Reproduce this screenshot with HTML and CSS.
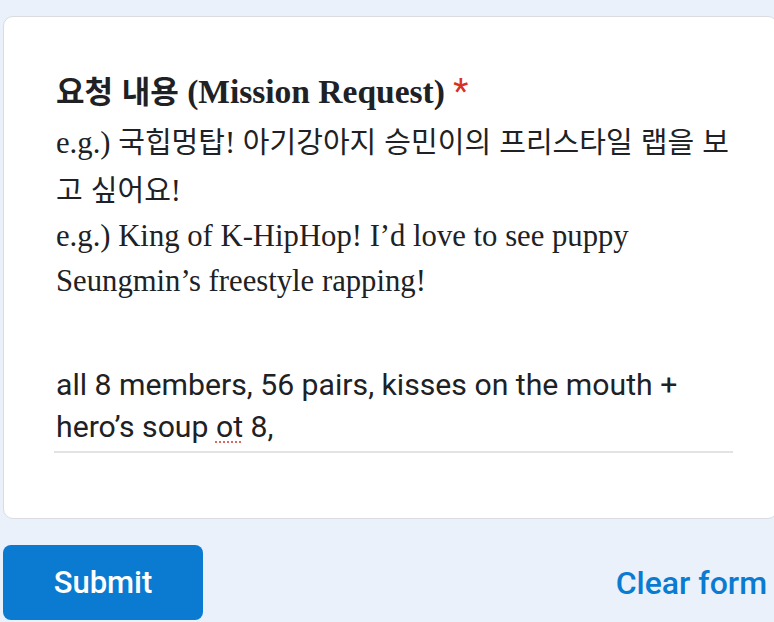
FILE: index.html
```html
<!DOCTYPE html>
<html lang="ko">
<head>
<meta charset="utf-8">
<title>Mission Request</title>
<link rel="stylesheet" href="styles.css">
</head>
<body>
<div class="card">
  <div class="title"><span class="ko-title">요청 내용</span> (Mission Request) <span class="req">*</span></div>
  <div class="desc">e.g.) <span class="ko">국힙멍탑</span>! <span class="ko">아기강아지 승민이의 프리스타일 랩을 보</span> <span class="ko">고 싶어요</span>!<br>e.g.) King of K-HipHop! I’d love to see puppy Seungmin’s freestyle rapping!</div>
  <div class="answer">all 8 members, 56 pairs, kisses on the mouth + hero’s soup <span class="spell">ot</span> 8,</div>
</div>
<div class="actions">
  <button class="submit" type="button">Submit</button>
  <span class="clear">Clear form</span>
</div>
</body>
</html>
```
FILE: styles.css
```css
html, body {
  margin: 0;
  padding: 0;
  overflow: hidden;
}
body {
  background: #eaf1fb;
  color: #202124;
  padding-top: 16px;
}
.card {
  box-sizing: border-box;
  margin-left: 3px;
  width: 775px;
  background: #ffffff;
  border: 1px solid #dadce0;
  border-radius: 10px;
  padding: 51px 44px 65px 50px;
}
.title {
  font-family: "Liberation Serif", "Noto Sans CJK KR", serif;
  font-weight: 700;
  font-size: 33.5px;
  line-height: 44px;
  padding-left: 2px;
}
.ko-title {
  font-family: "Noto Sans CJK KR", sans-serif;
  font-size: 31px;
}
.req {
  font-family: "Roboto", sans-serif;
  font-weight: 400;
  font-size: 35px;
  line-height: 1;
  color: #d93025;
}
.desc {
  margin-top: 4px;
  font-family: "Liberation Serif", "Noto Sans CJK KR", serif;
  font-size: 30.7px;
  line-height: 45px;
  padding-left: 2px;
}
.ko {
  font-family: "Noto Sans CJK KR", sans-serif;
  font-size: 29px;
  font-weight: 400;
}
.answer {
  margin-top: 60px;
  font-family: "Roboto", sans-serif;
  font-size: 30.2px;
  line-height: 42px;
  padding: 0 0 3px 2px;
  border-bottom: 2px solid #e2e3e5;
}
.spell {
  text-decoration: underline dotted #e06666;
  text-decoration-thickness: 2px;
  text-underline-offset: 4px;
}
.actions {
  display: flex;
  align-items: center;
  justify-content: space-between;
  margin: 26px 7px 0 3px;
}
.submit {
  width: 200px;
  height: 75px;
  border: none;
  border-radius: 8px;
  background: #0a7bd1;
  color: #ffffff;
  font-family: "Roboto", sans-serif;
  font-weight: 500;
  font-size: 31px;
  padding: 0;
}
.clear {
  color: #0a7bd1;
  font-family: "Roboto", sans-serif;
  font-weight: 500;
  font-size: 32px;
}
```
